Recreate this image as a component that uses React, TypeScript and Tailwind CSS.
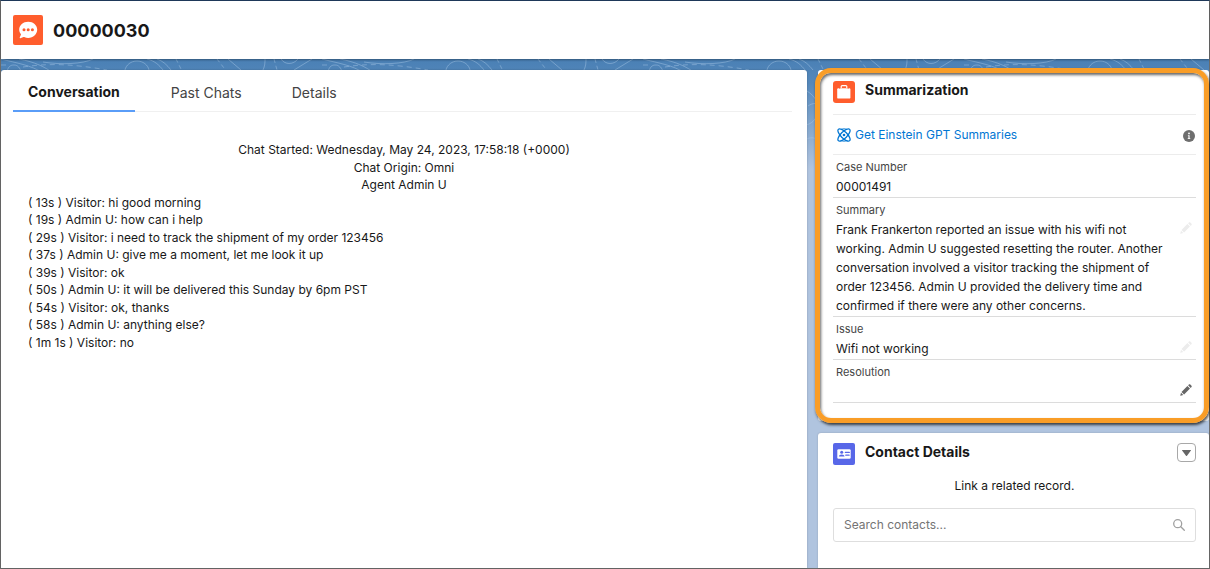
import React from "react";

const chatMeta = [
  "Chat Started: Wednesday, May 24, 2023, 17:58:18 (+0000)",
  "Chat Origin: Omni",
  "Agent Admin U",
];

const chatLines = [
  "( 13s ) Visitor: hi good morning",
  "( 19s ) Admin U: how can i help",
  "( 29s ) Visitor: i need to track the shipment of my order 123456",
  "( 37s ) Admin U: give me a moment, let me look it up",
  "( 39s ) Visitor: ok",
  "( 50s ) Admin U: it will be delivered this Sunday by 6pm PST",
  "( 54s ) Visitor: ok, thanks",
  "( 58s ) Admin U: anything else?",
  "( 1m 1s ) Visitor: no",
];

function ChatIcon() {
  return (
    <svg viewBox="0 0 30 30" className="size-[30px] shrink-0" aria-hidden="true">
      <rect width="30" height="30" rx="2" fill="#ff5d2d" />
      <path
        d="M15.2 6.7c-5 0-9 3.5-9 7.8 0 1.7.6 3.2 1.6 4.5.2.2.2.5.1.8l-1.2 2.7c-.2.5.2.8.7.7l3.1-1.2c.2-.1.5-.1.7 0 1.2.6 2.6.9 4 .9 5 0 9-3.7 9-8.3s-4-7.900-9-7.900z"
        fill="#fff"
      />
      <circle cx="11" cy="14.7" r="1.5" fill="#ff5d2d" />
      <circle cx="15.2" cy="14.7" r="1.5" fill="#ff5d2d" />
      <circle cx="19.4" cy="14.7" r="1.5" fill="#ff5d2d" />
    </svg>
  );
}

function CaseIcon() {
  return (
    <svg viewBox="0 0 22 22" className="size-[22px] shrink-0" aria-hidden="true">
      <rect width="22" height="22" rx="3" fill="#ff5d2d" />
      <path d="M8.2 7V5.600c0-.6.4-1 1-1h3.600c.6 0 1 .4 1 1V7" fill="none" stroke="#fff" strokeWidth="1.2" />
      <rect x="4.2" y="7.2" width="13.2" height="10.4" rx="1.2" fill="#fff" />
      <path d="M6.700 6.600v1.200M15.200 6.600v1.200" stroke="#ff5d2d" strokeWidth="0.8" />
    </svg>
  );
}

function ContactIcon() {
  return (
    <svg viewBox="0 0 22 22" className="size-[22px] shrink-0" aria-hidden="true">
      <rect width="22" height="22" rx="2" fill="#5867e8" />
      <rect x="4.3" y="6.2" width="13.4" height="9.6" rx="1.2" fill="#fff" />
      <circle cx="8.7" cy="9.3" r="1.5" fill="#5867e8" />
      <path d="M5.900 13.500c0-1.400 1.200-2.100 2.800-2.100s2.800.7 2.800 2.100z" fill="#5867e8" />
      <path d="M12.400 9.400h3.900M12.800 12.200h3.300" stroke="#5867e8" strokeWidth="1.3" strokeLinecap="round" />
    </svg>
  );
}

function EinsteinIcon() {
  return (
    <svg viewBox="0 0 14 14" className="size-[14px] shrink-0" fill="none" stroke="#0176d3" strokeWidth="1.3" aria-hidden="true">
      <ellipse cx="7" cy="7" rx="8" ry="3.2" transform="rotate(45 7 7)" />
      <ellipse cx="7" cy="7" rx="8" ry="3.2" transform="rotate(-45 7 7)" />
      <path d="M4 1.500c2-.9 4-.9 6 0M4 12.500c2 .9 4 .9 6 0" strokeWidth="0.9" />
      <circle cx="7" cy="7" r="1.3" fill="#0176d3" stroke="none" />
    </svg>
  );
}

function PencilIcon() {
  return (
    <svg viewBox="0 0 12 12" className="size-3" fill="currentColor" aria-hidden="true">
      <path d="M8.900.5c.4-.4 1-.4 1.400 0l1.200 1.200c.4.4.4 1 0 1.400l-.8.8-2.600-2.600zM7.400 2l2.600 2.600-5.900 5.900L1.500 7.900zM1 8.700l2.300 2.300-2.700.7c-.2 0-.4-.1-.3-.3z" />
    </svg>
  );
}

function BackdropPattern() {
  return (
    <svg className="absolute inset-0 h-full w-full" aria-hidden="true">
      <defs>
        <pattern id="topo" width="321" height="124" patternUnits="userSpaceOnUse">
          <g fill="none" stroke="#a9c8e6" strokeOpacity="0.45" strokeWidth="1">
            <path d="M0 0C15 4 30 6 42 14M18 0C34 3 44 8 52 14M42 3C60 6 82 5 92 0" />
            <path d="M6 13c1-5 3-7 7-7s6 3 7 7" />
            <path d="M0 6h9M22 8c26-4 50-3 84 3" strokeDasharray="5 4" />
            <path d="M124 11c1-5 6-9 12-9s11 4 12 9M146 0c8 2 12 6 16 11M156 0c6 2 10 6 14 11" />
            <path d="M175 0l5 10M216 0l7 9M273 0l3 11" strokeDasharray="4 3" />
            <path d="M227 0l13 11M262 11c2-4 2-8 2-11M280 0c4 6 12 6 17 0M293 11L311 0" />
            <path d="M164 32c8 5 14 14 10 24s-12 12-20 8M165 47c10-7 18 2 24 9M158 84c10-9 16-5 24 2" />
          </g>
        </pattern>
      </defs>
      <rect width="100%" height="124" fill="url(#topo)" />
    </svg>
  );
}

function Field({
  label,
  children,
  edit,
}: {
  label: string;
  children?: React.ReactNode;
  edit?: "faint" | "strong";
}) {
  return (
    <div className="border-b border-[#dcdcdc] pt-1 pb-px pl-[3px]">
      <dt className="mb-0.5 text-[11px] leading-4 text-[#444]">{label}</dt>
      <dd className="flex min-h-[19px] items-start text-[12px] leading-[19px] text-[#181818]">
        <span className="flex-1 pr-2">{children}</span>
        {edit && (
          <button
            type="button"
            aria-label={"Edit " + label}
            className={
              edit === "strong"
                ? "mr-1 pt-0.5 text-[#666]"
                : "mr-1 pt-0.5 text-[#ececec]"
            }
          >
            <PencilIcon />
          </button>
        )}
      </dd>
    </div>
  );
}

export default function App() {
  return (
    <div className="flex min-h-screen flex-col border border-[#6b6b6b] border-t-[#1f3a5c] bg-white font-[Inter,'Liberation_Sans',sans-serif] text-[#181818]">
      <header className="relative z-10 flex h-[58px] items-center gap-[10px] bg-white px-3 shadow-[0_1px_2px_rgba(0,0,0,0.35)]">
        <ChatIcon />
        <h1 className="pt-px text-[18px] leading-6 font-bold">00000030</h1>
      </header>

      <div className="relative flex flex-1 flex-col bg-[#b0c4df] bg-[linear-gradient(#4a80b5_0px,#5588bb_24px,#b0c4df_110px)]">
        <BackdropPattern />
        <div className="relative grid flex-1 grid-cols-[minmax(0,1fr)_391px] gap-[11px] pt-[11px]">
          <main className="rounded-t-[3px] bg-white px-3 shadow-[0_0_2px_rgba(0,0,0,0.25)]">
            <nav className="mr-[3px] flex h-[42px] border-b border-[#f0f0f0] text-[14px]" role="tablist">
              <button
                type="button"
                role="tab"
                aria-selected="true"
                className="-mb-px border-b-2 border-[#5a9df8] px-[15px] pt-[3px] font-bold"
              >
                Conversation
              </button>
              <button type="button" role="tab" aria-selected="false" className="ml-[21px] px-[15px] pt-[3px] text-[#444]">
                Past Chats
              </button>
              <button type="button" role="tab" aria-selected="false" className="ml-5 px-[15px] pt-[3px] text-[#444]">
                Details
              </button>
            </nav>
            <div className="mt-[29px] grid min-h-[210px] auto-rows-fr px-[15px] text-[12px] leading-[17px]">
              {chatMeta.map((line) => (
                <p key={line} className="text-center">{line}</p>
              ))}
              {chatLines.map((line) => (
                <p key={line}>{line}</p>
              ))}
            </div>
          </main>

          <aside className="flex flex-col gap-3">
            <section className="relative rounded-[3px] bg-white px-[13px] pb-[18px] pl-[15px]">
              <div className="pointer-events-none absolute -top-0.5 right-0 -bottom-0.5 -left-[3px] rounded-[16px] border-[5px] border-[#f99d27] shadow-[1px_2px_3px_rgba(0,0,0,0.7),inset_1px_2px_3px_rgba(0,0,0,0.6)]" />
              <div className="flex h-[45px] items-start gap-[10px] border-b border-[#ececec] pt-[11px]">
                <CaseIcon />
                <h2 className="text-[14px] leading-[18px] font-bold">Summarization</h2>
              </div>
              <div className="flex h-10 items-center justify-between border-b border-[#ececec] pr-px pl-1">
                <button type="button" className="flex items-center gap-1 text-[12px] leading-5 text-[#0176d3]">
                  <EinsteinIcon />
                  Get Einstein GPT Summaries
                </button>
                <button type="button" aria-label="More information" className="pt-[3px]">
                  <svg viewBox="0 0 12 12" className="size-3" aria-hidden="true">
                    <circle cx="6" cy="6" r="6" fill="#6e6e6e" />
                    <circle cx="6" cy="3.4" r="0.9" fill="#fff" />
                    <path d="M4.900 5.200h1.700v3h.7v.8H4.700v-.8h.7V6h-.5z" fill="#fff" />
                  </svg>
                </button>
              </div>
              <dl>
                <Field label="Case Number">00001491</Field>
                <Field label="Summary" edit="faint">
                  Frank Frankerton reported an issue with his wifi not working. Admin U suggested
                  resetting the router. Another conversation involved a visitor tracking the
                  shipment of order 123456. Admin U provided the delivery time and confirmed if
                  there were any other concerns.
                </Field>
                <Field label="Issue" edit="faint">Wifi not working</Field>
                <Field label="Resolution" edit="strong" />
              </dl>
            </section>

            <section className="flex-1 rounded-t-[3px] bg-white pr-[13px] pl-[15px] shadow-[0_0_2px_rgba(0,0,0,0.2)]">
              <div className="flex items-start gap-[10px] pt-[10px]">
                <ContactIcon />
                <h2 className="flex-1 text-[14px] leading-[18px] font-bold">Contact Details</h2>
                <button
                  type="button"
                  aria-label="Show contact actions"
                  className="flex size-[19px] items-center justify-center rounded-[4px] border border-[#a8a8a8] bg-white"
                >
                  <svg viewBox="0 0 9 6" className="h-[6px] w-[9px]" aria-hidden="true">
                    <path d="M.3 0h8.400c.3 0 .4.3.2.5L5 5.700c-.3.3-.7.3-1 0L.1.5C-.1.3 0 0 .3 0z" fill="#666" />
                  </svg>
                </button>
              </div>
              <p className="mt-[11px] text-center text-[12px] leading-5">Link a related record.</p>
              <div className="mt-3 flex h-[34px] items-center rounded-[3px] border border-[#dedede] px-[10px]">
                <input
                  type="search"
                  aria-label="Search contacts"
                  placeholder="Search contacts..."
                  className="min-w-0 flex-1 bg-transparent text-[12px] outline-none placeholder:text-[#747474]"
                />
                <svg viewBox="0 0 12 12" className="size-3" fill="none" stroke="#a0a0a0" strokeWidth="1.3" strokeLinecap="round" aria-hidden="true">
                  <circle cx="4.7" cy="4.7" r="4" />
                  <path d="M7.800 7.800l3.500 3.500" />
                </svg>
              </div>
            </section>
          </aside>
        </div>
      </div>
    </div>
  );
}
